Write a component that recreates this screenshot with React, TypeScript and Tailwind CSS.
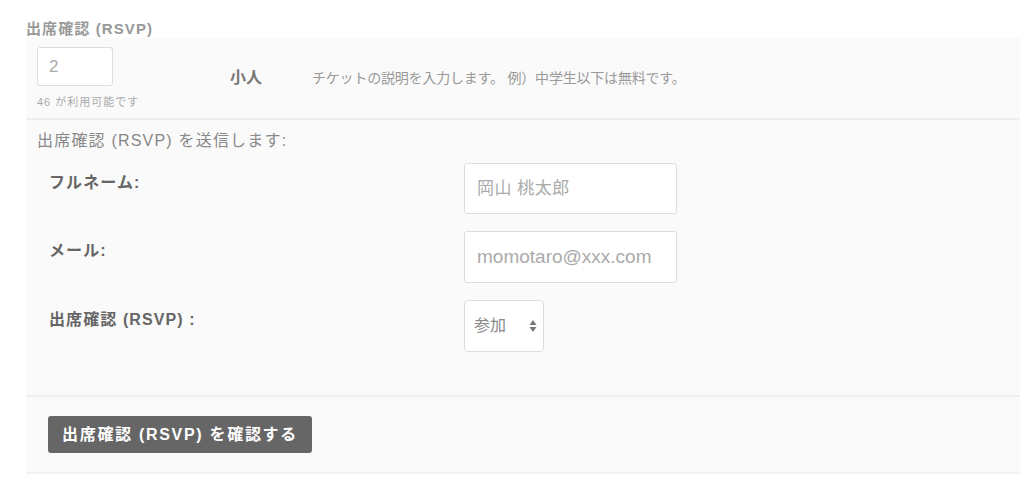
import React from 'react';

const font = "font-['Liberation_Sans','Noto_Sans_CJK_JP',sans-serif]";

interface FieldRowProps {
  label: string;
  children: React.ReactNode;
}

const FieldRow: React.FC<FieldRowProps> = ({ label, children }) => (
  <div className="flex items-start">
    <div className="w-[427px] pl-[12px] pt-[10px] text-[16px] leading-[20px] font-bold text-[#666] tracking-[1.1px]">
      {label}
    </div>
    {children}
  </div>
);

export default function App() {
  return (
    <div className={`min-h-[477px] bg-white pl-[26px] pt-[19px] ${font}`}>
      {/* Title */}
      <div className="text-[15px] leading-[19px] font-bold text-[#999] tracking-[1.1px]">出席確認 (RSVP)</div>

      <div className="bg-[#fafafa]">
        {/* Ticket row */}
        <div className="flex items-center pl-[11px] pt-[9px] pb-[9px] border-b-2 border-[#eeeeee]">
          <div className="w-[76px]">
            <div className="h-[39px] w-[76px] bg-white border border-[#dddddd] rounded-[3px] pl-[11px] flex items-center text-[17px] text-[#aaa]">
              2
            </div>
            <div className="mt-[9px] text-[11px] leading-[14px] text-[#aaa] tracking-[1px] whitespace-nowrap">46 が利用可能です</div>
          </div>
          <div className="ml-[117px] w-[50px] text-[16px] font-bold text-[#777]">小人</div>
          <div className="ml-[32px] text-[14px] text-[#999] tracking-[-0.2px]">チケットの説明を入力します。 例）中学生以下は無料です。</div>
        </div>

        {/* Form */}
        <div className="pl-[11px] pt-[11px] pb-[43px] border-b-2 border-[#eeeeee]">
          <div className="text-[16px] leading-[20px] text-[#888] tracking-[1.2px]">出席確認 (RSVP) を送信します:</div>
          <div className="mt-[12px] flex flex-col gap-[17px]">
            <FieldRow label="フルネーム:">
              <div className="h-[51px] w-[213px] bg-white border border-[#dddddd] rounded-[3px] pl-[12px] flex items-center text-[17px] text-[#aaa] tracking-[0.5px]">
                岡山 桃太郎
              </div>
            </FieldRow>
            <FieldRow label="メール:">
              <div className="h-[52px] w-[213px] bg-white border border-[#dddddd] rounded-[3px] pl-[12px] flex items-center text-[19px] text-[#aaa]">
                momotaro@xxx.com
              </div>
            </FieldRow>
            <FieldRow label="出席確認 (RSVP) :">
              <div className="h-[52px] w-[80px] bg-white border border-[#dddddd] rounded-[4px] pl-[9px] pr-[6px] flex items-center justify-between text-[16px] text-[#888]">
                <span>参加</span>
                <svg width="8" height="14" viewBox="0 0 8 14">
                  <path d="M4 1 L7.5 6 L0.5 6 Z" fill="#777" />
                  <path d="M4 13 L7.5 8 L0.5 8 Z" fill="#777" />
                </svg>
              </div>
            </FieldRow>
          </div>
        </div>

        {/* Submit */}
        <div className="pl-[22px] pt-[19px] pb-[19px] border-b-2 border-[#f2f2f2]">
          <button className="h-[37px] px-[14px] bg-[#666] rounded-[3px] text-white text-[16px] font-bold tracking-[1.7px]">
            出席確認 (RSVP) を確認する
          </button>
        </div>
      </div>
    </div>
  );
}
